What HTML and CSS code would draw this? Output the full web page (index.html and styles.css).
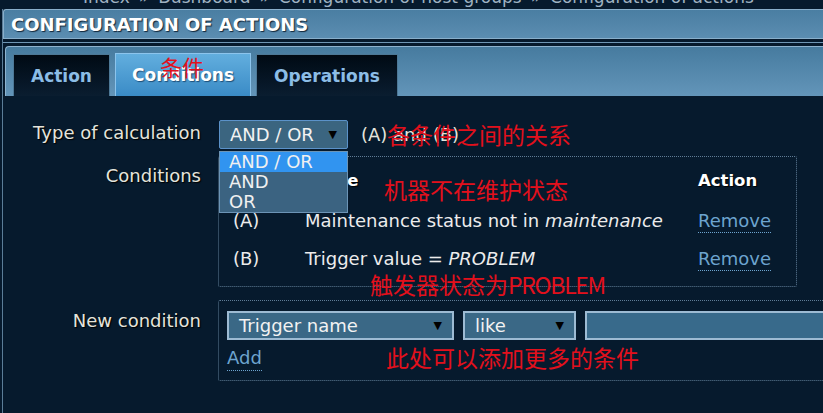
FILE: index.html
```html
<!DOCTYPE html>
<html lang="en">
<head>
  <meta charset="UTF-8">
  <title>Configuration of actions</title>
  <link rel="stylesheet" href="styles.css">
</head>
<body>
  <div class="crumbs">
    <span>Index</span><b>»</b><span>Dashboard</span><b>»</b><span>Configuration of host groups</span><b>»</b><span>Configuration of actions</span>
  </div>
  <div class="page">
    <div class="title">CONFIGURATION OF ACTIONS</div>
    <div class="tabwrap">
      <div class="tabs">
        <a class="tab">Action</a>
        <a class="tab active">Conditions</a>
        <a class="tab">Operations</a>
      </div>
    </div>

    <div class="form">
      <div class="label l-calc">Type of calculation</div>
      <div class="field calc">
        <div class="select sel-calc">AND / OR<span class="arrow">▼</span></div>
        <span class="expr">(A) and (B)</span>
        <ul class="dropdown">
          <li class="hl">AND / OR</li>
          <li>AND</li>
          <li>OR</li>
        </ul>
      </div>

      <div class="label l-conds">Conditions</div>
      <div class="box conds">
        <table>
          <tr><th class="c1">Label</th><th class="c2">Name</th><th class="c3">Action</th></tr>
          <tr><td>(A)</td><td>Maintenance status not in <i>maintenance</i></td><td><a class="link">Remove</a></td></tr>
          <tr><td>(B)</td><td>Trigger value = <i>PROBLEM</i></td><td><a class="link">Remove</a></td></tr>
        </table>
      </div>

      <div class="label l-new">New condition</div>
      <div class="box newcond">
        <div class="inputs">
          <div class="select sel-type">Trigger name<span class="arrow">▼</span></div>
          <div class="select sel-op">like<span class="arrow">▼</span></div>
          <div class="textbox"></div>
        </div>
        <a class="link add">Add</a>
      </div>
    </div>

    <!-- notas en rojo -->
    <div class="note n-tab">条件</div>
    <div class="note n-calc">各条件之间的关系</div>
    <div class="note n-maint">机器不在维护状态</div>
    <div class="note n-trig">触发器状态为<span class="latin">PROBLEM</span></div>
    <div class="note n-add">此处可以添加更多的条件</div>
  </div>
</body>
</html>
```

FILE: styles.css
```css
body {
  margin: 0;
  background-color: #061a2d;
  font-family: "DejaVu Sans", Verdana, sans-serif;
  font-size: 18px;
  color: #e6e6e0;
  overflow: hidden;
}

.crumbs {
  height: 8px;
  overflow: hidden;
  padding-left: 83px;
  color: #9fb2c2;
  white-space: nowrap;
  font-size: 17px;
  line-height: 18px;
}

.crumbs span,
.crumbs b {
  display: inline-block;
  margin-top: -12px;
  vertical-align: top;
}

.crumbs b {
  font-weight: normal;
  margin-left: 9px;
  margin-right: 9px;
}

.page {
  position: relative;
  margin-left: 2px;
  border-left: 1px solid #5b7d98;
  height: 405px;
}

.title {
  height: 28px;
  line-height: 29px;
  margin-top: 1px;
  padding-left: 7px;
  background: linear-gradient(#4a7ea2, #5b8db1);
  border: 1px solid #89afcb;
  border-right: none;
  border-radius: 3px 0 0 0;
  color: #ffffff;
  font-weight: bold;
  font-size: 18px;
  text-shadow: 1px 1px 1px #10263a;
  white-space: nowrap;
}

.tabwrap {
  margin-top: 3px;
  border-top: 1px solid #6f97b6;
  padding-top: 3px;
}

.tabs {
  display: flex;
  gap: 5px;
  height: 42px;
  padding: 7px 0 0 7px;
  margin-left: 2px;
  background: linear-gradient(#467b9f, #6395b9);
  border-top: 1px solid #8db3cf;
  border-left: 1px solid #8db3cf;
  border-radius: 4px 0 0 0;
}

.tab {
  display: flex;
  align-items: center;
  justify-content: center;
  height: 41px;
  padding: 0 17px;
  background: linear-gradient(#000a14, #0a1d30);
  border: 1px solid #4d7896;
  border-bottom: none;
  color: #8cbde6;
  font-weight: bold;
  font-size: 17px;
}

.tab.active {
  height: 42px;
  margin-top: -1px;
  padding: 0 16px;
  background: linear-gradient(#62aede, #3a8bc6);
  border-color: #8cc4ec;
  color: #ffffff;
  text-shadow: 1px 1px 1px #1e4f78;
}

.form {
  display: grid;
  grid-template-columns: 198px 1fr;
  column-gap: 18px;
  padding-top: 23px;
}

.label {
  text-align: right;
  color: #e4e4dc;
  text-shadow: 1px 1px 1px #000;
  line-height: 22px;
  white-space: nowrap;
}

.l-calc { padding-top: 3px; }
.l-conds { padding-top: 16px; }
.l-new { padding-top: 23px; }

.calc {
  position: relative;
  display: flex;
  align-items: center;
  gap: 13px;
  height: 30px;
}

.select {
  display: flex;
  align-items: center;
  justify-content: space-between;
  box-sizing: border-box;
  height: 29px;
  padding: 0 10px;
  background-color: #3a6886;
  border: 2px solid #9dbbd3;
  color: #f2f2f2;
}

.arrow {
  color: #000;
  font-size: 11px;
}

.sel-calc {
  width: 129px;
  background-color: #3b6580;
  border: 1px solid #5b92c9;
  border-radius: 2px;
}

.expr {
  color: #e4e4dc;
}

.dropdown {
  position: absolute;
  top: 32px;
  left: 0;
  width: 127px;
  margin: 0;
  padding: 0;
  list-style: none;
  background-color: #3b6381;
  border: 1px solid #6c94b6;
  z-index: 5;
  line-height: 20px;
  color: #f0f0f0;
}

.dropdown li {
  padding-left: 9px;
}

.dropdown li.hl {
  background-color: #3194f0;
}

.box {
  border: 1px dotted #5f7c96;
  border-radius: 2px;
}

.conds {
  width: 577px;
  margin-top: 7px;
  margin-left: -1px;
  height: 129px;
}

.conds table {
  border-collapse: collapse;
  margin: 9px 0 0 14px;
}

.conds th {
  text-align: left;
  vertical-align: top;
  font-weight: bold;
  font-size: 16.5px;
  line-height: 30px;
  color: #ffffff;
  text-shadow: 1px 1px 1px #000;
  height: 35px;
  padding: 0;
}

.conds td {
  height: 38px;
  padding: 0;
  color: #ececec;
}

.conds .c1 { width: 72px; }
.conds .c2 { width: 393px; }

.link {
  color: #6da4cf;
  border-bottom: 1px dotted #6da4cf;
  padding-bottom: 1px;
}

.newcond {
  margin-top: 13px;
  margin-left: -1px;
  height: 81px;
  margin-right: -20px;
  padding: 10px 0 0 8px;
  box-sizing: border-box;
}

.inputs {
  display: flex;
  gap: 9px;
}

.sel-type { width: 227px; }
.sel-op { width: 113px; }

.textbox {
  flex: 1;
  height: 29px;
  box-sizing: border-box;
  background-color: #386a8b;
  border: 2px solid #9dbbd3;
}

.add {
  display: inline-block;
  margin-top: 7px;
  line-height: 22px;
}

.note {
  position: absolute;
  color: #e3101c;
  font-family: "Noto Sans CJK SC", sans-serif;
  font-size: 23px;
  line-height: 24px;
  white-space: nowrap;
  z-index: 6;
}

.note .latin {
  letter-spacing: -1.3px;
}

.n-tab { left: 157px; top: 45px; font-size: 22px; }
.n-calc { left: 384px; top: 113px; }
.n-maint { left: 381px; top: 168px; }
.n-trig { left: 367px; top: 263px; }
.n-add { left: 383px; top: 336px; }
```
